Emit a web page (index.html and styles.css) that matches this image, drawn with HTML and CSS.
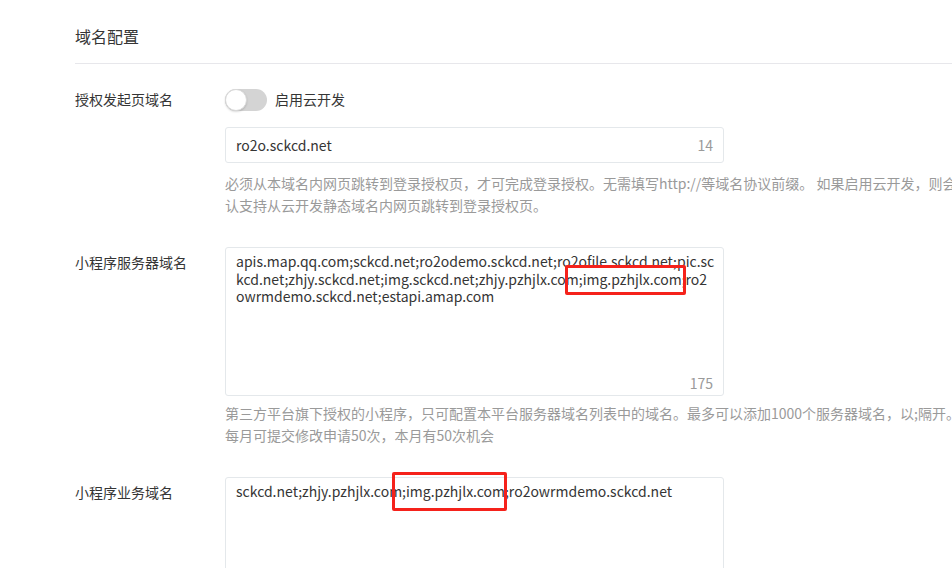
FILE: index.html
```html
<!DOCTYPE html>
<html lang="zh-CN">
<head>
    <meta charset="UTF-8">
    <meta name="viewport" content="width=device-width, initial-scale=1.0">
    <title>域名配置</title>
    <link rel="stylesheet" href="styles.css">
</head>
<body>
    <div class="page">
        <h2 class="section-title">域名配置</h2>

        <div class="form-row first">
            <label class="row-label">授权发起页域名</label>
            <div class="row-body">
                <div class="switch-line">
                    <span class="switch"><span class="switch-knob"></span></span>
                    <span class="switch-text">启用云开发</span>
                </div>
                <div class="input-box">
                    <input type="text" class="text-input" value="ro2o.sckcd.net">
                    <span class="counter">14</span>
                </div>
                <p class="help">必须从本域名内网页跳转到登录授权页，才可完成登录授权。无需填写http://等域名协议前缀。 如果启用云开发，则会默认支持从云开发静态域名内网页跳转到登录授权页。</p>
            </div>
        </div>

        <div class="form-row">
            <label class="row-label">小程序服务器域名</label>
            <div class="row-body">
                <div class="area-box">
                    <textarea class="text-area">apis.map.qq.com;sckcd.net;ro2odemo.sckcd.net;ro2ofile.sckcd.net;pic.sckcd.net;zhjy.sckcd.net;img.sckcd.net;zhjy.pzhjlx.com;img.pzhjlx.com;ro2owrmdemo.sckcd.net;estapi.amap.com</textarea>
                    <span class="counter area-counter">175</span>
                </div>
                <p class="help help-tight">第三方平台旗下授权的小程序，只可配置本平台服务器域名列表中的域名。最多可以添加1000个服务器域名，以;隔开。</p>
                <p class="help help-next">每月可提交修改申请50次，本月有50次机会</p>
            </div>
        </div>

        <div class="form-row">
            <label class="row-label">小程序业务域名</label>
            <div class="row-body">
                <div class="area-box">
                    <textarea class="text-area">sckcd.net;zhjy.pzhjlx.com;img.pzhjlx.com;ro2owrmdemo.sckcd.net</textarea>
                </div>
            </div>
        </div>

        <!-- 标注框 -->
        <span class="mark mark-server"></span>
        <span class="mark mark-business"></span>
    </div>
</body>
</html>
```

FILE: styles.css
```css
html, body {
    margin: 0;
    padding: 0;
    background: #fff;
    overflow: hidden;
}

body {
    font-family: "Noto Sans CJK SC", "Noto Sans", sans-serif;
    font-size: 14px;
    color: #353535;
}

.page {
    position: relative;
    width: 1000px;
    padding-left: 75px;
}

.section-title {
    margin: 0;
    padding: 25px 0 16px;
    font-size: 16px;
    font-weight: normal;
    line-height: 22px;
    border-bottom: 1px solid #e7e7eb;
}

.form-row {
    display: flex;
    margin-top: 31px;
}

.form-row.first {
    margin-top: 25px;
}

.row-label {
    width: 150px;
    flex-shrink: 0;
    line-height: 22px;
    padding-top: 4px;
}

.form-row.first .row-label {
    padding-top: 0;
    margin-top: -1px;
}

.row-body {
    width: 752px;
}

.switch-line {
    display: flex;
    align-items: center;
    height: 22px;
    gap: 8px;
}

.switch-text {
    margin-top: -2px;
}

.switch {
    position: relative;
    width: 42px;
    height: 22px;
    border-radius: 11px;
    background: #d4d4d4;
}

.switch-knob {
    position: absolute;
    left: 0;
    top: 0;
    width: 20px;
    height: 20px;
    border-radius: 50%;
    background: #fff;
    border: 1px solid #d9d9d9;
    box-shadow: 0 1px 2px rgba(0, 0, 0, 0.15);
}

.input-box,
.area-box {
    display: flex;
    width: 499px;
    box-sizing: border-box;
    border: 1px solid #e4e8eb;
    border-radius: 3px;
    background: #fff;
}

.input-box {
    margin-top: 16px;
    height: 36px;
    align-items: center;
    padding: 0 10px;
}

.text-input {
    flex: 1;
    border: none;
    outline: none;
    padding: 0;
    font: inherit;
    color: #353535;
}

.counter {
    color: #9a9a9a;
}

.area-box {
    position: relative;
    height: 149px;
}

.text-area {
    width: 100%;
    height: 100%;
    box-sizing: border-box;
    border: none;
    outline: none;
    resize: none;
    padding: 5px 8px 6px 10px;
    font: inherit;
    line-height: 17.5px;
    color: #353535;
    word-break: break-all;
    background: transparent;
}

.area-counter {
    position: absolute;
    right: 10px;
    bottom: 1px;
    line-height: 22px;
}

.help {
    margin: 9px 0 0;
    line-height: 22px;
    color: #9a9a9a;
}

.help-tight {
    margin-top: 6px;
}

.help-next {
    margin-top: 0;
}

.mark {
    position: absolute;
    box-sizing: border-box;
    border: 3px solid #f5221b;
    border-radius: 2px;
}

.mark-server {
    left: 565px;
    top: 265px;
    width: 121px;
    height: 30px;
}

.mark-business {
    left: 392px;
    top: 472px;
    width: 115px;
    height: 39px;
}
```
